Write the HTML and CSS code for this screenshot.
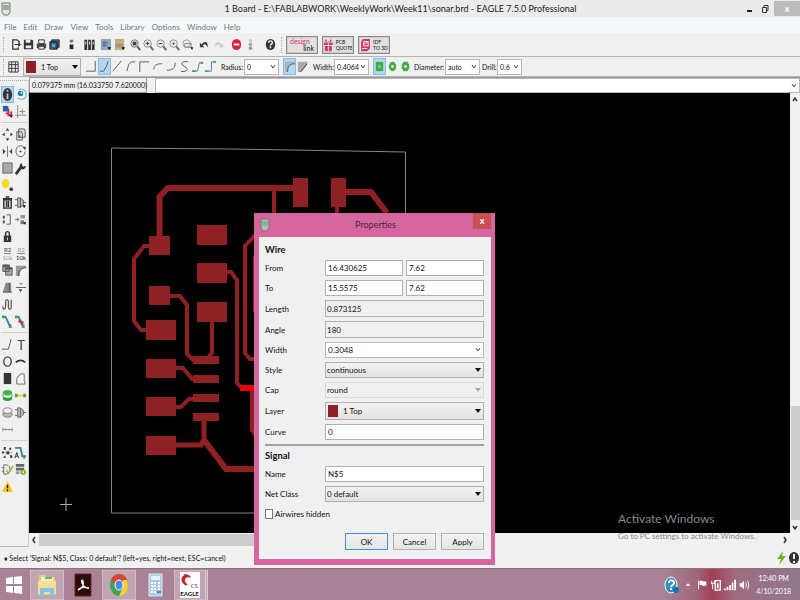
FILE: index.html
```html
<!DOCTYPE html>
<html lang="en">

<head>
    <meta charset="utf-8">
    <title>1 Board - EAGLE 7.5.0 Professional</title>
    <link rel="stylesheet" href="styles.css">
</head>

<body>

    <header class="titlebar">
        <svg class="board-icon" viewBox="0 0 10 14"><path d="M1 1h8v9l-2 3H3l-2-3z" fill="#dfe6dc" stroke="#777"/><rect x="2" y="3" width="6" height="5" fill="#8db58a"/></svg>
        <h1 class="window-title">1 Board - E:\FABLABWORK\WeeklyWork\Week11\sonar.brd - EAGLE 7.5.0 Professional</h1>
        <div class="window-buttons">
            <button aria-label="Minimize"><svg viewBox="0 0 12 14"><path d="M3 9h5" stroke="#222" stroke-width="2"/></svg></button>
            <button aria-label="Restore"><svg viewBox="0 0 12 14"><path d="M3.500 5.500h4v5h-4zM5 5V3.500h4v5H8" fill="none" stroke="#333"/></svg></button>
            <button class="window-close" aria-label="Close">x</button>
        </div>
    </header>

    <nav class="menubar">
        <button>File</button>
        <button>Edit</button>
        <button>Draw</button>
        <button>View</button>
        <button>Tools</button>
        <button>Library</button>
        <button>Options</button>
        <button>Window</button>
        <button>Help</button>
    </nav>

    <div class="toolbar toolbar-main">
        <span class="handle"></span>
        <div class="group narrow">
            <button aria-label="Open"><svg viewBox="0 0 14 16"><path d="M9 3H4v10h6v-2M9 3l2 2v1M6 8h6M10 6l2 2-2 2" fill="none" stroke="#333" stroke-width="1.300"/></svg></button>
            <button aria-label="Save"><svg viewBox="0 0 14 16"><path d="M2 3h9l1 1v9H2z" fill="#333"/><path d="M4 3h5v3H4zM4 9h6v3H4z" fill="#eee"/></svg></button>
            <button aria-label="Print"><svg viewBox="0 0 14 16"><path d="M2 7h10v5H2z" fill="#444"/><path d="M4 3h6v4H4zM4 10h6v3H4z" fill="#eee" stroke="#333"/></svg></button>
            <button aria-label="CAM"><svg viewBox="0 0 14 16"><path d="M4 3h8v8H4z" fill="#666" stroke="#222"/><path d="M2 5h8v8H2z" fill="#294c68" stroke="#222"/><path d="M4 7h4v4H4z" fill="#22b6d8"/><path d="M3 11h3v2H3z" fill="#b42c58"/></svg></button>
        </div>
        <div class="group spaced">
            <button aria-label="Board to schematic"><svg viewBox="0 0 14 16"><path d="M7 3v3M5 4h4" stroke="#777" stroke-width="2"/><path d="M5 8h4v5H5z" fill="#222"/></svg></button>
        </div>
        <div class="group spaced">
            <button aria-label="Library"><svg viewBox="0 0 14 16"><path d="M3 3v11M7 3v11M11 3v11" stroke="#333" stroke-width="3"/><path d="M3 5v3M7 5v3M11 5v3" stroke="#ddd" stroke-width="1"/></svg></button>
        </div>
        <div class="group">
            <button aria-label="Script"><svg viewBox="0 0 14 16"><path d="M2 2h11v12H2z" fill="#91a6bc"/><path d="M4 6h5M4 9h4" stroke="#536c86" stroke-width="2"/><path d="M9 11h4l-2 3z" fill="#111"/></svg></button>
            <button aria-label="ULP"><svg viewBox="0 0 14 16"><path d="M2 2h10v12H2z" fill="#c7ad80"/><path d="M3 9h8" stroke="#a99779" stroke-width="4"/><path d="M9 11h4l-2 3z" fill="#111"/></svg></button>
        </div>
        <div class="group narrow zoom-group">
            <button aria-label="Zoom to fit"><svg viewBox="0 0 14 16"><circle cx="6" cy="7" r="4" fill="#ddd" stroke="#777"/><path d="M4 5h4v4H4z" fill="#444"/><path d="M9 10l3 4" stroke="#555" stroke-width="2"/></svg></button>
            <button aria-label="Zoom in"><svg viewBox="0 0 14 16"><circle cx="6" cy="7" r="4" fill="#eee" stroke="#888"/><path d="M4 7h4M6 5v4" stroke="#333"/><path d="M9 10l3 4" stroke="#666" stroke-width="2"/></svg></button>
            <button aria-label="Zoom out"><svg viewBox="0 0 14 16"><circle cx="6" cy="7" r="4" fill="#eee" stroke="#888"/><path d="M4 7h4" stroke="#333"/><path d="M9 10l3 4" stroke="#666" stroke-width="2"/></svg></button>
            <button aria-label="Redraw"><svg viewBox="0 0 14 16"><circle cx="6" cy="7" r="4" fill="#eee" stroke="#888"/><path d="M5 6h2v2H5z" fill="#333"/><path d="M9 10l3 4" stroke="#666" stroke-width="2"/></svg></button>
            <button aria-label="Zoom select"><svg viewBox="0 0 14 16"><circle cx="6" cy="7" r="4" fill="#eee" stroke="#999"/><path d="M4 7h7v4H4z" fill="none" stroke="#888"/><path d="M10 11h3l-1 3z" fill="#111"/></svg></button>
        </div>
        <div class="group spaced">
            <button aria-label="Undo"><svg viewBox="0 0 14 16"><path d="M2 6v5h5L5 9c2-2 4-2 5 2 2-5-3-8-6-3z" fill="#333"/></svg></button>
            <button aria-label="Redo"><svg viewBox="0 0 14 16"><path d="M12 6v5H7l2-2C7 7 5 8 4 11 2 6 7 3 10 8z" fill="#ccc"/></svg></button>
        </div>
        <div class="group spaced">
            <button aria-label="Stop"><svg viewBox="0 0 14 16"><ellipse cx="7" cy="8" rx="5" ry="6" fill="#d8203f"/><path d="M4 8h6" stroke="#fff" stroke-width="2"/></svg></button>
            <button aria-label="Go"><svg viewBox="0 0 14 16"><circle cx="7" cy="4" r="2" fill="#ccc"/><circle cx="7" cy="8" r="2" fill="#aaa"/><circle cx="7" cy="12" r="2" fill="#999"/></svg></button>
        </div>
        <div class="group help-group">
            <button aria-label="Help"><svg viewBox="0 0 14 16"><ellipse cx="7" cy="8" rx="5" ry="6" fill="#333"/><path d="M5 6c0-3 4-2 4 0S7 7 7 9M7 10v2" fill="none" stroke="#fff" stroke-width="1.500"/></svg></button>
        </div>
        <span class="handle"></span>
        <button class="badge-button design"><b>design</b><span>link</span></button>
        <button class="badge-button"><svg viewBox="0 0 12 16"><path d="M1 5h10v3H1zM2 9h8v6H2zM3 1l3 4 3-4 1 3H2z" fill="#d2386a"/><path d="M6 5v10" stroke="#eee"/></svg><span>PCB<br>QUOTE</span></button>
        <button class="badge-button"><svg viewBox="0 0 12 16"><path d="M3 1h8v11l-3 3H1V4z" fill="#d2386a"/><path d="M4 4h5v5H4zM4 7l5-3M2 12h6" fill="none" stroke="#fff"/></svg><span>IDF<br>TO 3D</span></button>
    </div>

    <div class="toolbar toolbar-params">
        <span class="handle"></span>
        <button class="grid-button" aria-label="Grid"><svg viewBox="0 0 14 16"><path d="M2 3h10v11H2zM5 3v11M9 3v11M2 6h10M2 10h10" fill="none" stroke="#333"/></svg></button>
        <div class="swatch-select layer-select">
            <span class="swatch"></span>
            <select aria-label="Layer"><option>1 Top</option></select>
        </div>
        <div class="group narrow bends">
            <button aria-label="Bend 0"><svg viewBox="0 0 14 16"><path d="M1 13h10V2"/></svg></button>
            <button class="active" aria-label="Bend 1"><svg viewBox="0 0 14 16"><path d="M2 13h4l3-5 2-6"/></svg></button>
            <button aria-label="Bend 2"><svg viewBox="0 0 14 16"><path d="M2 13L11 2"/></svg></button>
            <button aria-label="Bend 3"><svg viewBox="0 0 14 16"><path d="M3 13l2-7 3-3h4"/></svg></button>
            <button aria-label="Bend 4"><svg viewBox="0 0 14 16"><path d="M3 14V3h10"/></svg></button>
        </div>
        <div class="group narrow bends">
            <button aria-label="Bend 5"><svg viewBox="0 0 14 16"><path d="M2 11c0-5 4-6 9-6"/></svg></button>
            <button aria-label="Bend 6"><svg viewBox="0 0 14 16"><path d="M2 12c6 0 9-2 9-8"/></svg></button>
            <button aria-label="Bend 7"><svg viewBox="0 0 14 16"><path d="M11 3c-3-1-7 0-7 2 0 3 6 3 6 6 0 2-4 3-7 2"/></svg></button>
            <button aria-label="Follow me"><svg viewBox="0 0 14 16"><path class="route" d="M3 13h4l2-9h4"/><path class="route-end" d="M1 13h4M10 4h3"/></svg></button>
            <button aria-label="Miter"><svg viewBox="0 0 14 16"><path class="route" d="M3 13h5V3h5"/><path class="route-end" d="M1 13h4M10 3h3"/></svg></button>
        </div>
        <label class="param" for="radius">Radius:</label>
        <select class="combo combo-wide" id="radius"><option>0</option></select>
        <div class="group narrow miter">
            <button class="active" aria-label="Round miter"><svg viewBox="0 0 14 16"><path d="M2 3h10v2C7 5 5 8 5 14H2z" fill="#a5b3bf"/><path d="M5 14c0-6 2-9 8-9" fill="none" stroke="#555"/></svg></button>
            <button aria-label="Straight miter"><svg viewBox="0 0 14 16"><path d="M2 3h10v2L5 14H2z" fill="#aaa"/><path d="M5 14l7-9" stroke="#333"/></svg></button>
        </div>
        <label class="param" for="wire-width">Width:</label>
        <select class="combo combo-wide" id="wire-width"><option>0.4064</option></select>
        <div class="group narrow shapes">
            <button class="active" aria-label="Square via"><svg viewBox="0 0 14 16"><path d="M3 3h8v10H3z" fill="#3fae3f"/><circle cx="7" cy="8" r="1.500" fill="#8fc9a0"/></svg></button>
            <button aria-label="Round via"><svg viewBox="0 0 14 16"><ellipse cx="7" cy="8" rx="4" ry="5" fill="#3fae3f"/><circle cx="7" cy="8" r="1.500" fill="#eee"/></svg></button>
            <button aria-label="Octagon via"><svg viewBox="0 0 14 16"><path d="M5 3h4l2 3v4l-2 3H5l-2-3V6z" fill="#3fae3f"/><circle cx="7" cy="8" r="1.500" fill="#eee"/></svg></button>
        </div>
        <label class="param" for="diameter">Diameter:</label>
        <select class="combo combo-wide" id="diameter"><option>auto</option></select>
        <label class="param drill" for="drill">Drill:</label>
        <select class="combo combo-small" id="drill"><option>0.6</option></select>
    </div>

    <main class="editor">
        <aside class="palette">
            <div class="palette-group">
                <button class="active" aria-label="Info"><svg viewBox="0 0 14 16"><ellipse cx="7" cy="8" rx="5" ry="7" fill="#333"/><path d="M7 3v2M7 7v6" stroke="#bbb" stroke-width="2"/></svg></button>
                <button aria-label="Show"><svg viewBox="0 0 14 16"><path d="M5 3c4-2 8 0 8 5s-5 6-9 4" fill="#fff" stroke="#7cc6de" stroke-width="1.500"/><circle cx="7" cy="7" r="3" fill="#1f7fae"/><circle cx="8" cy="6" r="1" fill="#fff"/></svg></button>
                <button aria-label="Display"><svg viewBox="0 0 14 16"><path d="M2 2h6v6H2z" fill="#2463a8"/><path d="M8 5v5H5M11 8v4H7" fill="none" stroke="#c92551" stroke-width="2"/><path d="M9 12h4l-2 3z" fill="#222"/></svg></button>
                <button aria-label="Mark"><svg viewBox="0 0 14 16"><path d="M4 1v14M1 12h12M6 8h6M9 5v6" fill="none" stroke="#888"/></svg></button>
            </div>
            <div class="palette-group">
                <button aria-label="Move"><svg viewBox="0 0 14 16"><path d="M7 1l2 3H5zM7 15l2-3H5zM1 8l3-2v4zM13 8l-3-2v4z" fill="#444"/></svg></button>
                <button aria-label="Copy"><svg viewBox="0 0 14 16"><path d="M5 2h6l1 2v7H5zM3 5h5l1 2v7H3z" fill="#ddd" stroke="#555"/><path d="M5 9h2v2H5z" fill="#555"/></svg></button>
                <button aria-label="Mirror"><svg viewBox="0 0 14 16"><path d="M7 2v12" stroke="#777"/><path d="M2 5l3 3-3 3zM12 5L9 8l3 3z" fill="#444"/></svg></button>
                <button aria-label="Rotate"><svg viewBox="0 0 14 16"><path d="M11 4a5 6 0 1 0 1 4" fill="none" stroke="#666"/><path d="M9 3l4 0-1 4z" fill="#555"/><circle cx="7" cy="8" r="1" fill="#333"/></svg></button>
                <button aria-label="Group"><svg viewBox="0 0 14 16"><path d="M2 2h10v11H2z" fill="#aaa" stroke="#666"/></svg></button>
                <button aria-label="Change"><svg viewBox="0 0 14 16"><path d="M2 14l6-8" stroke="#333" stroke-width="3"/><path d="M8 2c-3 2-2 6 1 7 2 0 4-2 4-4l-3 1-1-1z" fill="#333"/></svg></button>
                <button aria-label="Paste"><svg viewBox="0 0 14 16"><ellipse cx="5" cy="6" rx="4" ry="5" fill="#f8dc22"/><circle cx="11" cy="12" r="2" fill="#444"/></svg></button>
                <span></span>
                <button aria-label="Delete"><svg viewBox="0 0 14 16"><path d="M3 5h8v9H3z" fill="#ddd" stroke="#333" stroke-width="1.500"/><path d="M2 4h10M5 2h4M6 6v7M8 6v7" stroke="#333" stroke-width="1.500"/></svg></button>
                <button aria-label="Add"><svg viewBox="0 0 14 16"><path d="M4 3h2c6 1 6 9 0 10H4zM1 5h3M1 11h3M10 8h3M7 3v11" fill="#bbb" stroke="#555"/><path d="M9 11h4l-2 3z" fill="#111"/></svg></button>
                <button aria-label="Pinswap"><svg viewBox="0 0 14 16"><path d="M6 3h4v10H6" fill="none" stroke="#555"/><path d="M2 4h2v3H2zM2 9h2v3H2z" fill="#444"/></svg></button>
                <button aria-label="Replace"><svg viewBox="0 0 14 16"><path d="M1 8h5M4 6v4" stroke="#777"/><path d="M7 3h5v4H7z" fill="#999"/><path d="M7 9h4v4H7z" fill="#777"/><path d="M10 11h3l-1 3z" fill="#111"/></svg></button>
                <button aria-label="Lock"><svg viewBox="0 0 14 16"><path d="M3 7h8v7H3z" fill="#333"/><path d="M5 8V5c0-3 4-3 4 0v3" fill="none" stroke="#333" stroke-width="1.500"/><path d="M7 9v3" stroke="#ddd"/></svg></button>
                <span></span>
                <button class="text-tool" aria-label="Name"><b>R2</b><span>10k</span></button>
                <button class="text-tool value" aria-label="Value"><b>R2</b><span>10k</span></button>
                <button aria-label="Smash"><svg viewBox="0 0 14 16"><path d="M2 2h7v7H2zM5 5h7v8H5z" fill="#aaa" stroke="#555"/><path d="M2 3h7M5 6h7" stroke="#555" stroke-width="2"/></svg></button>
                <button aria-label="Miter"><svg viewBox="0 0 14 16"><path d="M2 14V3h11v2C8 5 6 8 6 14z" fill="#999"/><path d="M5 14c0-6 3-9 8-9" fill="none" stroke="#444"/></svg></button>
                <button aria-label="Split"><svg viewBox="0 0 14 16"><path d="M5 3h6v10H2z" fill="#888"/><path d="M2 13h10M9 3v10" stroke="#555"/></svg></button>
                <button aria-label="Optimize"><svg viewBox="0 0 14 16"><path d="M2 8h11M6 4h3" stroke="#555"/><path d="M5 10h4l-2 3z" fill="#444"/></svg></button>
                <button aria-label="Meander"><svg viewBox="0 0 14 16"><path d="M2 10c0 4 3 4 3 0V5c0-3 3-3 3 0v6c0 3 3 3 3 0V3" fill="none" stroke="#555" stroke-width="1.300"/></svg></button>
                <span></span>
                <button aria-label="Route"><svg viewBox="0 0 14 16"><path d="M2 3h3l4 9h2" fill="none" stroke="#2d84ae" stroke-width="2"/><path d="M1 3h3M10 12v3" stroke="#46a34a" stroke-width="3"/></svg></button>
                <button aria-label="Ripup"><svg viewBox="0 0 14 16"><path d="M2 3h3l4 9h2" fill="none" stroke="#2d84ae" stroke-width="2"/><path d="M1 3h3M10 12v3" stroke="#46a34a" stroke-width="3"/><path d="M5 7l5 3" stroke="#cf2755" stroke-width="3"/></svg></button>
            </div>
            <div class="palette-group">
                <button aria-label="Wire"><svg viewBox="0 0 14 16"><path d="M1 13h7l3-11" fill="none" stroke="#555"/></svg></button>
                <button class="text-glyph" aria-label="Text">T</button>
                <button aria-label="Circle"><svg viewBox="0 0 14 16"><ellipse cx="7" cy="8" rx="4" ry="5" fill="none" stroke="#444" stroke-width="1.500"/></svg></button>
                <button aria-label="Arc"><svg viewBox="0 0 14 16"><path d="M2 9c2-3 8-3 10 0" fill="none" stroke="#333" stroke-width="2"/></svg></button>
                <button aria-label="Rectangle"><svg viewBox="0 0 14 16"><path d="M3 2h8v12H3z" fill="#333"/></svg></button>
                <button aria-label="Polygon"><svg viewBox="0 0 14 16"><path d="M3 14V8l4-5h4v7l1 4z" fill="#f6f6f6" stroke="#666"/></svg></button>
                <button aria-label="Via"><svg viewBox="0 0 14 16"><ellipse cx="7" cy="11" rx="5" ry="3" fill="#2c9e35"/><ellipse cx="7" cy="8" rx="5" ry="3" fill="#e6f4e5" stroke="#2c9e35"/><ellipse cx="7" cy="5" rx="5" ry="3" fill="#3db847"/></svg></button>
                <button aria-label="Signal"><svg viewBox="0 0 14 16"><path d="M2 8h10" stroke="#e3ce28" stroke-width="2"/><path d="M1 6h3v4H1zM10 6h3v4h-3z" fill="#5ea838"/></svg></button>
                <button aria-label="Hole"><svg viewBox="0 0 14 16"><ellipse cx="7" cy="10" rx="5" ry="3" fill="#bbb" stroke="#777"/><ellipse cx="7" cy="6" rx="5" ry="3" fill="#eee" stroke="#777"/></svg></button>
                <button aria-label="Attribute"><svg viewBox="0 0 14 16"><path d="M4 3h2c6 1 6 9 0 10H4zM1 5h3M1 11h3M10 8h3M7 3v11" fill="#bbb" stroke="#666"/></svg></button>
                <button aria-label="Dimension"><svg viewBox="0 0 14 16"><path d="M2 6v4M12 6v4M2 8h10M5 7v2M9 7v2" stroke="#888"/></svg></button>
                <span></span>
            </div>
            <div class="palette-group">
                <button aria-label="Ratsnest"><svg viewBox="0 0 14 16"><path d="M3 3l8 10M11 3L3 13M1 8h12" stroke="#bbb"/><path d="M3 2h2v3H3zM9 3h2v2H9zM6 7h3v3H6zM3 12h2v2H3zM10 11h2v3h-2zM1 7h2v2H1z" fill="#333"/></svg></button>
                <button aria-label="Auto"><svg viewBox="0 0 14 16"><path d="M3 3h4l2 9h4" fill="none" stroke="#2d84ae" stroke-width="2"/><path d="M1 3h3M11 12v3" stroke="#46a34a" stroke-width="2"/><path d="M1 14l2-6 2 6M2 12h2" fill="none" stroke="#333"/></svg></button>
                <button aria-label="ERC"><svg viewBox="0 0 14 16"><path d="M3 3h3c5 1 5 9 0 10H3zM1 6h2M1 10h2" fill="#eee" stroke="#666"/><path d="M6 9l2 3 5-8" fill="none" stroke="#82b92e" stroke-width="1.500"/></svg></button>
                <button aria-label="DRC"><svg viewBox="0 0 14 16"><path d="M2 2h9v3H2zM2 6h9v3H2z" fill="#666"/><path d="M2 10h4v3H2z" fill="#999"/><circle cx="10" cy="11" r="3" fill="#7db83d"/><circle cx="10" cy="11" r="1" fill="#fff"/></svg></button>
                <button aria-label="Errors"><svg viewBox="0 0 14 16"><path d="M7 2l6 12H1z" fill="#f8c51a"/><path d="M7 6v4M7 11v2" stroke="#222" stroke-width="1.500"/></svg></button>
            </div>
        </aside>

        <div class="command-row">
            <output class="coords">0.079375 mm (16.033750 7.620000)</output>
            <select class="combo command" aria-label="Command"><option></option></select>
        </div>

        <div class="board">
            <svg viewBox="29 93 760 440" preserveAspectRatio="xMinYMin meet">
                <path class="outline" d="M111.500 148l120 1 174 3v361h-294z"/>
                <g class="trace">
                    <path d="M159.500 240v-43l8-9h126" stroke-width="6"/>
                    <path d="M274 188v30"/>
                    <path d="M346 192h25l16 21" stroke-width="6"/>
                    <path d="M337 205v12"/>
                    <path d="M150 246h-6l-10 13v62l7 9h6"/>
                    <path d="M170 296h10l7 9v49l9 9"/>
                    <path d="M212 320v33l-7 8"/>
                    <path d="M226 272h5l6 8v103l6 6"/>
                    <path d="M257 233l-12 13v107l5 6h8"/>
                    <path d="M255 256v56"/>
                    <path d="M252 390v40l6 9"/>
                    <path d="M175 368h8l9 11h4"/>
                    <path d="M175 407h6l8-8h6"/>
                    <path d="M175 445h26l3-6v-20" stroke-width="5"/>
                    <path d="M204 440l22 29h32" stroke-width="6"/>
                </g>
                <path class="selected" d="M240 388h18"/>
                <g class="pad">
                    <rect x="293" y="178" width="15" height="29"/>
                    <rect x="331" y="178" width="15" height="29"/>
                    <rect x="149" y="236" width="21" height="19"/>
                    <rect x="197" y="225" width="30" height="20"/>
                    <rect x="197" y="263" width="30" height="20"/>
                    <rect x="149" y="286" width="21" height="19"/>
                    <rect x="197" y="302" width="30" height="20"/>
                    <rect x="146" y="320" width="30" height="20"/>
                    <rect x="146" y="359" width="30" height="19"/>
                    <rect x="146" y="397" width="30" height="19"/>
                    <rect x="146" y="436" width="30" height="19"/>
                    <rect x="193" y="356" width="26" height="8"/>
                    <rect x="193" y="375" width="26" height="8"/>
                    <rect x="193" y="394" width="26" height="8"/>
                    <rect x="193" y="413" width="26" height="8"/>
                </g>
                <path class="cursor" d="M60 504.500h12M66 498v13"/>
            </svg>
        </div>

        <div class="scroll scroll-y">
            <svg viewBox="0 0 10 10"><path d="M3 6l2-3 2 3"/></svg>
            <span class="thumb"></span>
            <svg viewBox="0 0 10 10"><path d="M3 4l2 3 2-3"/></svg>
        </div>

        <div class="scroll scroll-x">
            <svg viewBox="0 0 10 10"><path d="M6 2L4 5l2 3"/></svg>
            <span class="thumb"></span>
            <svg viewBox="0 0 10 10"><path d="M4 2l2 3-2 3"/></svg>
        </div>
    </main>

    <div class="statusbar">
        <p>&#9830; Select 'Signal: N$5, Class: 0 default'? (left=yes, right=next, ESC=cancel)</p>
        <svg class="status-icon" viewBox="0 0 12 16"><path d="M8 1L2 9h4l-2 6 7-9H7z" fill="#63bb28"/></svg>
        <svg class="status-icon" viewBox="0 0 12 16"><ellipse cx="6" cy="8" rx="5" ry="6" fill="#333"/><path d="M6 4v5M6 11v2" stroke="#eee" stroke-width="2"/></svg>
    </div>

    <footer class="taskbar">
        <button class="start" aria-label="Start"><svg viewBox="0 0 16 20"><path d="M0 3l7-1v7H0zM8 2l8-1v8H8zM0 11h7v7l-7-1zM8 11h8v8l-8-1z" fill="#fff"/></svg></button>
        <button class="task open" aria-label="File Explorer"><svg viewBox="0 0 20 24"><path d="M2 2h6l2 2h8v18H1z" fill="#e8ce72"/><path d="M4 4h12v5H4z" fill="#f7f1c6"/><path d="M8 5h7" stroke="#6cb46c" stroke-width="2"/><path d="M1 8h18v13H1z" fill="#f4df92"/><path d="M3 23v-8h14v8h-4v-4H7v4z" fill="#7fc5e8"/></svg></button>
        <button class="task" aria-label="Acrobat Reader"><svg viewBox="0 0 20 24"><path d="M2 1h16v22H2z" fill="#2b0d0d" stroke="#7a1a1a"/><path d="M5 17c4-1 6-5 5-9-1-2-2 0-1 2 1 3 3 5 7 5M5 17c2-3 6-3 10-2" fill="none" stroke="#fff" stroke-width="1.300"/></svg></button>
        <button class="task open" aria-label="Chrome"><svg viewBox="0 0 20 24"><ellipse cx="10" cy="12" rx="9" ry="11" fill="#3fa350"/><path d="M10 1c4 0 7 2 8 6H10c-3 0-4 3-4 5L2 6c2-3 5-5 8-5z" fill="#dc4437"/><path d="M10 23l4-9V7h4c3 8-1 16-8 16z" fill="#f7cb3a"/><ellipse cx="10" cy="12" rx="4" ry="5" fill="#4b86e8" stroke="#fff"/></svg></button>
        <button class="task" aria-label="Calculator"><svg viewBox="0 0 20 24"><path d="M4 1h13v22H4z" fill="#a9cbe6" stroke="#d8e8f3"/><path d="M6 3h9v4H6z" fill="#e6f2f8"/><path d="M6 10h2M9 10h2M13 10h2M6 13h2M9 13h2M13 13h2M6 16h2M9 16h2M13 16h2M6 19h2M9 19h2" stroke="#fff" stroke-width="2"/><path d="M12 19h4" stroke="#4d8bc0" stroke-width="2"/></svg></button>
        <button class="task open stacked" aria-label="EAGLE">
            <span class="eagle-tile">
                <svg viewBox="0 0 18 16"><path d="M8 1C1 2-1 10 7 15l3-1C5 10 5 6 10 4z" fill="#c9202e"/><path d="M5 1c5-1 8 1 9 4l-5-1z" fill="#c9202e"/></svg>
                <i>CS</i>
                <b>EAGLE</b>
            </span>
        </button>
        <div class="tray">
            <svg class="tray-help" viewBox="0 0 16 18"><ellipse cx="7" cy="9" rx="6" ry="8" fill="#2d8fc4" stroke="#fff"/><path d="M5 7c0-4 5-3 5 0 0 2-3 2-3 4M7 12v2" fill="none" stroke="#fff" stroke-width="2"/><circle cx="12" cy="14" r="3" fill="#1a70ad"/></svg>
            <svg viewBox="0 0 14 16"><path d="M4 9l3-3 3 3z" fill="#fff"/></svg>
            <svg viewBox="0 0 14 16"><path d="M3 3v10" stroke="#fff"/><path d="M4 3h4v1h4v5H7V8H4z" fill="#fff"/></svg>
            <svg viewBox="0 0 14 16"><path d="M6 3h6v11H6z" fill="none" stroke="#fff" stroke-width="1.500"/><path d="M8 6h2v6H8z" fill="#fff"/><path d="M2 3v4M5 3v4M1 6h5M3 7v6" stroke="#fff"/></svg>
            <svg viewBox="0 0 14 16"><path d="M1 14v-2M4 14v-4M7 14V8M10 14V5M13 14V2" stroke="#fff" stroke-width="2"/></svg>
            <svg viewBox="0 0 14 16"><path d="M2 6h2l3-3v10l-3-3H2z" fill="#fff"/><path d="M9 5c1 2 1 4 0 6M11 3c2 3 2 7 0 10" fill="none" stroke="#fff"/></svg>
            <div class="clock"><time>12:40 PM</time><time>4/10/2018</time></div>
        </div>
    </footer>

    <div class="watermark">
        <p class="watermark-title">Activate Windows</p>
        <p>Go to PC settings to activate Windows.</p>
    </div>

    <form class="dialog" role="dialog" aria-labelledby="dialog-title">
        <div class="dialog-bar">
            <svg class="board-icon" viewBox="0 0 10 14"><path d="M1 1h8v9l-2 3H3l-2-3z" fill="#b9b9b9" stroke="#777"/><rect x="2" y="3" width="6" height="5" fill="#7fb58f"/></svg>
            <h2 id="dialog-title">Properties</h2>
            <button type="button" class="dialog-close" aria-label="Close">x</button>
        </div>
        <div class="dialog-body">
            <h3>Wire</h3>
            <div class="fields">
                <label for="from-x">From</label>
                <div class="pair">
                    <input id="from-x" value="16.430625">
                    <input aria-label="From y" value="7.62">
                </div>
                <label for="to-x">To</label>
                <div class="pair">
                    <input id="to-x" value="15.5575">
                    <input aria-label="To y" value="7.62">
                </div>
                <label for="length">Length</label>
                <input id="length" value="0.873125" readonly>
                <label for="angle">Angle</label>
                <input id="angle" value="180" readonly>
                <label for="width">Width</label>
                <select class="combo" id="width"><option>0.3048</option></select>
                <label for="style">Style</label>
                <select class="dropdown" id="style"><option>continuous</option></select>
                <label for="cap">Cap</label>
                <select class="dropdown" id="cap" disabled><option>round</option></select>
                <label for="layer">Layer</label>
                <div class="swatch-select">
                    <span class="swatch"></span>
                    <select id="layer"><option>1 Top</option></select>
                </div>
                <label for="curve">Curve</label>
                <input id="curve" value="0">
            </div>
            <hr>
            <h3>Signal</h3>
            <div class="fields">
                <label for="name">Name</label>
                <input id="name" value="N$5">
                <label for="net-class">Net Class</label>
                <select class="dropdown" id="net-class"><option>0 default</option></select>
            </div>
            <label class="check"><input type="checkbox"> Airwires hidden</label>
            <div class="dialog-actions">
                <button type="button" class="default">OK</button>
                <button type="button">Cancel</button>
                <button type="button">Apply</button>
            </div>
        </div>
    </form>

</body>

</html>
```
FILE: styles.css
```css
* {
    box-sizing: border-box;
}

body {
    margin: 0;
    height: 100vh;
    display: flex;
    flex-direction: column;
    overflow: hidden;
    background: #f0f0f0;
    color: #111;
    font-family: Lato, "Liberation Sans", sans-serif;
    font-size: 8px;
    line-height: 12px;
}

h1, h2, h3, p {
    margin: 0;
    font-weight: normal;
}

button, input, select {
    font: inherit;
    color: inherit;
    margin: 0;
    padding: 0;
}

button {
    border: none;
    background: none;
}

svg {
    display: block;
}

/* title bar and menu */

.titlebar {
    height: 17px;
    display: flex;
    align-items: center;
    background: #ebebeb;
}

.board-icon {
    width: 10px;
    height: 14px;
    margin-left: 1px;
}

.window-title {
    flex: 1;
    padding-left: 46px;
    text-align: center;
    font-size: 9px;
    line-height: 17px;
    color: #222;
}

.window-buttons {
    display: flex;
}

.window-buttons button {
    width: 15px;
    height: 15px;
}

.window-buttons svg {
    width: 12px;
    height: 14px;
}

.window-buttons .window-close {
    width: 26px;
    background: #bcbcbc;
    color: #fff;
    font-weight: bold;
    font-size: 9px;
}

.menubar {
    height: 16px;
    display: flex;
    align-items: center;
    gap: 7px;
    padding: 4px 0 0 4px;
    background: #f4f8fb;
    color: #777;
}

/* toolbars */

.toolbar {
    display: flex;
    align-items: center;
    background: #f0f0f0;
    border-bottom: 1px solid #b4b4b4;
}

.toolbar-main {
    height: 24px;
}

.toolbar-params {
    height: 20px;
    font-size: 7px;
}

.handle {
    width: 2px;
    height: 16px;
    margin: 0 2px 0 3px;
    border-left: 1px dotted #aaa;
}

.group {
    display: flex;
    margin-left: 2px;
}

.group.spaced {
    margin-left: 4px;
}

.group button {
    width: 14px;
    height: 17px;
}

.group.narrow button {
    width: 13px;
}

.toolbar svg {
    width: 13px;
    height: 15px;
}

.help-group {
    margin-left: 6px;
}

.active {
    background: #b3d6f3;
    outline: 1px solid #8abbe4;
    outline-offset: -1px;
}

.badge-button {
    width: 32px;
    height: 18px;
    margin-left: 1px;
    margin-right: 3px;
    display: flex;
    align-items: center;
    justify-content: center;
    gap: 2px;
    background: #e0e0e0;
    border: 1px solid #888;
    outline: 1px solid #ccc;
    outline-offset: -2px;
    font-size: 5px;
    line-height: 6px;
    text-align: left;
}

.badge-button svg {
    width: 11px;
    height: 14px;
}

.badge-button.design {
    flex-direction: column;
    gap: 0;
    padding: 0 3px;
    font-size: 7px;
    line-height: 7px;
}

.design b {
    color: #d2386a;
    font-weight: normal;
    align-self: flex-start;
}

.design span {
    align-self: flex-end;
}

.grid-button {
    width: 13px;
    height: 17px;
}

.layer-select {
    width: 58px;
    margin: 0 2px 0 3px;
}

.bends path {
    fill: none;
    stroke: #555;
}

.bends .route {
    stroke: #3c7fa8;
}

.bends .route-end {
    stroke: #48a54c;
    stroke-width: 2;
}

.param {
    margin: 0 1px 0 3px;
    width: 23px;
    white-space: nowrap;
    text-align: right;
}

.param[for="wire-width"] {
    width: 20px;
}

.param[for="diameter"] {
    width: 30px;
    margin-left: 2px;
}

.param.drill {
    width: 14px;
    margin-left: 2px;
}

.miter,
.shapes {
    margin-left: 4px;
}

.miter {
    margin-right: 1px;
}

.combo,
.dropdown {
    appearance: none;
    height: 16px;
    border: 1px solid #b8b8b8;
    border-radius: 0;
    background: #fff url("data:image/svg+xml,%3Csvg xmlns='http://www.w3.org/2000/svg' width='8' height='8'%3E%3Cpath d='M2 2l2 3 2-3' fill='none' stroke='%23444'/%3E%3C/svg%3E") no-repeat right 1px center;
    padding-left: 2px;
}

.combo-wide {
    width: 35px;
}

.combo-small {
    width: 25px;
}

.dropdown,
.swatch-select {
    border: 1px solid #b0b0b0;
    background: url("data:image/svg+xml,%3Csvg xmlns='http://www.w3.org/2000/svg' width='8' height='8'%3E%3Cpath d='M1 2h6l-3 4z' fill='%23111'/%3E%3C/svg%3E") no-repeat right 1px center, linear-gradient(#f2f2f2, #e2e2e2);
}

.dropdown:disabled {
    opacity: 1;
    border-color: #d8d8d8;
    background: url("data:image/svg+xml,%3Csvg xmlns='http://www.w3.org/2000/svg' width='8' height='8'%3E%3Cpath d='M1 2h6l-3 4z' fill='%23aaa'/%3E%3C/svg%3E") no-repeat right 1px center, #efefef;
}

.swatch-select {
    height: 18px;
    display: flex;
    align-items: center;
    padding-left: 2px;
}

.swatch-select select {
    appearance: none;
    flex: 1;
    border: none;
    background: none;
}

.swatch {
    width: 10px;
    height: 12px;
    margin-right: 5px;
    background: #8f2024;
}

/* editor */

.editor {
    flex: 1;
    min-height: 0;
    display: grid;
    grid-template-columns: 29px 1fr 10px;
    grid-template-rows: 16px 1fr 14px;
}

.palette {
    grid-row: 1 / 4;
    margin-top: 3px;
    padding: 5px 1px 0;
    border-top: 1px dotted #aaa;
    border-right: 1px solid #ccc;
    border-bottom: 1px solid #bbb;
}

.palette-group {
    display: grid;
    grid-template-columns: 13px 14px;
    grid-auto-rows: 17px;
}

.palette-group + .palette-group {
    margin-top: 2px;
    padding-top: 3px;
    border-top: 1px solid #d0d0d0;
}

.palette svg {
    width: 13px;
    height: 15px;
}

.text-tool {
    display: flex;
    flex-direction: column;
    align-items: center;
    justify-content: center;
    font-size: 6px;
    line-height: 7px;
    color: #999;
}

.text-tool b {
    color: #444;
    font-weight: normal;
    border-bottom: 1px solid #888;
}

.text-tool.value b {
    color: #999;
}

.text-tool.value span {
    color: #222;
}

.text-glyph {
    font-size: 13px;
    color: #444;
}

.command-row {
    grid-column: 2 / 4;
    display: flex;
    border-top: 1px solid #999;
}

.coords {
    width: 118px;
    padding-left: 2px;
    font-size: 7px;
    line-height: 15px;
    border: 1px solid #999;
    border-top: none;
    white-space: nowrap;
}

.command {
    flex: 1;
    height: 15px;
    margin-left: 8px;
}

.board {
    grid-column: 2;
    background: #000;
    overflow: hidden;
    min-height: 0;
}

.board svg {
    width: 100%;
    height: 100%;
}

.outline {
    fill: none;
    stroke: #858585;
}

.trace {
    fill: none;
    stroke: #8f2024;
    stroke-width: 4;
}

.pad {
    fill: #8f2024;
}

.selected {
    stroke: #f00000;
    stroke-width: 6;
}

.cursor {
    stroke: #aaa;
}

.scroll {
    display: flex;
    align-items: center;
    background: #f0f0f0;
}

.scroll svg {
    width: 10px;
    height: 10px;
}

.scroll path {
    fill: none;
    stroke: #333;
    stroke-width: 1.5;
}

.scroll .thumb {
    background: #cdcdcd;
}

.scroll-y {
    flex-direction: column;
    justify-content: space-between;
    padding: 2px 0 1px;
}

.scroll-y .thumb {
    width: 9px;
    height: 26%;
    margin-top: auto;
    margin-bottom: 2px;
}

.scroll-x {
    grid-column: 2;
}

.scroll-x .thumb {
    width: 50%;
    height: 12px;
    margin-right: auto;
}

.statusbar {
    height: 21px;
    display: flex;
    align-items: center;
    padding-left: 4px;
    font-size: 7px;
}

.statusbar p {
    flex: 1;
}

.status-icon {
    width: 12px;
    height: 16px;
    margin-left: 1px;
}

/* taskbar */

.taskbar {
    height: 32px;
    display: flex;
    align-items: center;
    background: linear-gradient(90deg, #a98296 0%, #a78194 83%, #a0687b 87%, #a13f55 89%, #9f6c80 92%, #92788d 100%);
    border-top: 1px solid #8b7180;
}

.start {
    width: 16px;
    margin: 0 8px 0 6px;
}

.start svg {
    width: 16px;
    height: 20px;
}

.task {
    width: 34px;
    height: 30px;
    margin-right: 2px;
    display: flex;
    align-items: center;
    justify-content: center;
}

.task svg {
    width: 20px;
    height: 24px;
}

.task.open {
    background: #c1a5b2;
    border: 1px solid #cfb9c3;
}

.task.stacked {
    border-right: 3px double #dccbd3;
}

.eagle-tile {
    width: 20px;
    height: 26px;
    background: #fff;
    display: grid;
    grid-template-columns: 10px 9px;
    align-items: center;
    font-size: 6px;
    line-height: 7px;
    text-align: center;
}

.eagle-tile svg {
    width: 14px;
    height: 16px;
}

.eagle-tile i {
    align-self: end;
    color: #c9202e;
    font-style: normal;
}

.eagle-tile b {
    grid-column: 1 / 3;
}

.tray {
    margin-left: auto;
    padding-right: 9px;
    display: flex;
    align-items: center;
    color: #fff;
}

.tray svg {
    width: 12px;
    height: 14px;
    margin-right: 2px;
}

.tray .tray-help {
    width: 16px;
    height: 18px;
}

.clock {
    margin-left: 4px;
    display: flex;
    flex-direction: column;
    align-items: center;
    font-size: 7px;
    line-height: 13px;
}

.watermark {
    position: absolute;
    right: 33px;
    bottom: 58px;
    width: 149px;
    color: #8a8a8a;
    white-space: nowrap;
}

.watermark-title {
    font-size: 12px;
    line-height: 22px;
}

/* properties dialog */

.dialog {
    position: absolute;
    left: 254px;
    top: 213px;
    width: 241px;
    padding: 0 4px 6px 5px;
    background: #d6669f;
}

.dialog-bar {
    height: 24px;
    display: flex;
    align-items: center;
}

.dialog-bar h2 {
    flex: 1;
    padding-left: 8px;
    text-align: center;
    font-size: 9px;
    color: #4a2638;
}

.dialog-close {
    align-self: flex-start;
    width: 18px;
    height: 16px;
    background: #c94f50;
    color: #fff;
    font-weight: bold;
    font-size: 9px;
}

.dialog-body {
    padding: 7px 7px 9px 6px;
    background: #f0f0f0;
}

.dialog h3 {
    font-weight: bold;
    margin-bottom: 4px;
}

.fields {
    display: grid;
    grid-template-columns: 60px 1fr;
    row-gap: 4px;
    align-items: center;
}

.pair {
    display: flex;
    gap: 3px;
}

.fields input {
    width: 100%;
    min-width: 0;
    height: 16px;
    border: 1px solid #b0b0b0;
    padding-left: 2px;
    background: #fff;
}

.fields input[readonly] {
    height: 17px;
    padding-left: 1px;
    background: #efefef;
}

.dialog .dropdown {
    padding-left: 1px;
}

.dialog hr {
    height: 2px;
    margin: 4px 0;
    border: none;
    background: #a0a0a0;
}

.check {
    display: flex;
    align-items: center;
    gap: 2px;
    margin-top: 6px;
}

.check input {
    appearance: none;
    width: 8px;
    height: 10px;
    border: 1px solid #777;
    background: #fff;
}

.dialog-actions {
    display: flex;
    justify-content: flex-end;
    gap: 5px;
    margin-top: 13px;
}

.dialog-actions button {
    width: 43px;
    height: 17px;
    border: 1px solid #b0b0b0;
    background: linear-gradient(#f2f2f2, #e5e5e5);
}

.dialog-actions .default {
    border-color: #3c93dc;
}
```
